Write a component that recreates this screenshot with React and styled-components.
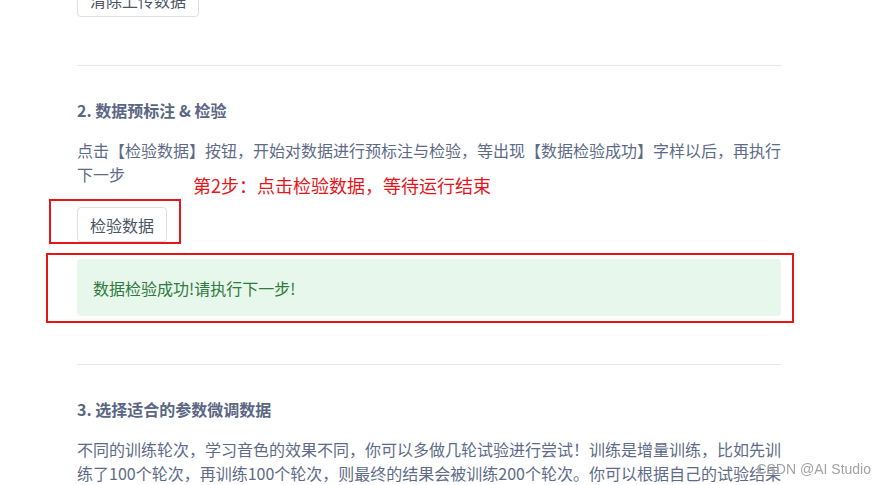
import React from "react";
import styled, { createGlobalStyle } from "styled-components";

const Global = createGlobalStyle`
    body {
        margin: 0;
        background: #fff;
        font-family: "Noto Sans CJK SC", "Liberation Sans", sans-serif;
        overflow: hidden;
    }
`;

const Content = styled.div`
    position: relative;
    display: flex;
    flex-direction: column;
    width: 704px;
    margin: -18px 0 0 77px;
`;

const Button = styled.button`
    align-self: flex-start;
    display: inline-flex;
    align-items: center;
    height: 35px;
    padding: 0 12px;
    border: 1px solid #dcdfe6;
    border-radius: 4px;
    background: #fff;
    color: #4b5563;
    font-family: inherit;
    font-size: 16px;
    cursor: pointer;
`;

const Divider = styled.hr`
    margin: 48px 0 0;
    border: 0;
    height: 1px;
    background: #e5e7eb;
`;

const Section = styled.section`
    position: relative;
    display: flex;
    flex-direction: column;
`;

const Heading = styled.h3`
    margin: 32px 0 0;
    font-size: 16px;
    line-height: 24px;
    font-weight: 700;
    color: #5a6684;
`;

const Para = styled.p`
    margin: 16px 0 0;
    font-size: 16px;
    line-height: 24px;
    color: #5e6b88;
`;

const ButtonRow = styled.div`
    display: flex;
    margin-top: 21px;
`;

const Alert = styled.div`
    display: flex;
    align-items: center;
    height: 57px;
    margin-top: 17px;
    padding: 0 16px;
    border-radius: 4px;
    background: #e7f7eb;
    color: #2f7a3e;
    font-size: 16px;
`;

/* red annotations drawn over the screenshot */
const Mark = styled.div`
    position: absolute;
    left: ${(p) => p.$x}px;
    top: ${(p) => p.$y}px;
    width: ${(p) => p.$w}px;
    height: ${(p) => p.$h}px;
    border: 2px solid #e4161b;
    box-sizing: border-box;
    pointer-events: none;
`;

const Note = styled.span`
    position: absolute;
    left: 116px;
    top: 107px;
    font-size: 18px;
    line-height: 24px;
    color: #e4161b;
    white-space: nowrap;
`;

const Watermark = styled.span`
    position: fixed;
    right: 15px;
    bottom: 8px;
    font-family: "Liberation Sans", Arial, sans-serif;
    font-size: 14px;
    color: #a3a3a3;
    text-shadow: 0 0 2px #fff;
`;

const App = () => {
    return (
        <>
            <Global />
            <Content>
                <Button>清除上传数据</Button>
                <Divider />
                <Section>
                    <Heading>2. 数据预标注 &amp; 检验</Heading>
                    <Para>
                        点击【检验数据】按钮，开始对数据进行预标注与检验，等出现【数据检验成功】字样以后，再执行下一步
                    </Para>
                    <ButtonRow>
                        <Button>检验数据</Button>
                    </ButtonRow>
                    <Alert>数据检验成功!请执行下一步!</Alert>
                    <Note>第2步：点击检验数据，等待运行结束</Note>
                    <Mark $x={-28} $y={133} $w={132} $h={45} />
                    <Mark $x={-31} $y={187} $w={748} $h={70} />
                </Section>
                <Divider />
                <Section>
                    <Heading>3. 选择适合的参数微调数据</Heading>
                    <Para>
                        不同的训练轮次，学习音色的效果不同，你可以多做几轮试验进行尝试！训练是增量训练，比如先训练了100个轮次，再训练100个轮次，则最终的结果会被训练200个轮次。你可以根据自己的试验结果
                    </Para>
                </Section>
            </Content>
            <Watermark>CSDN @AI Studio</Watermark>
        </>
    );
};

export default App;
